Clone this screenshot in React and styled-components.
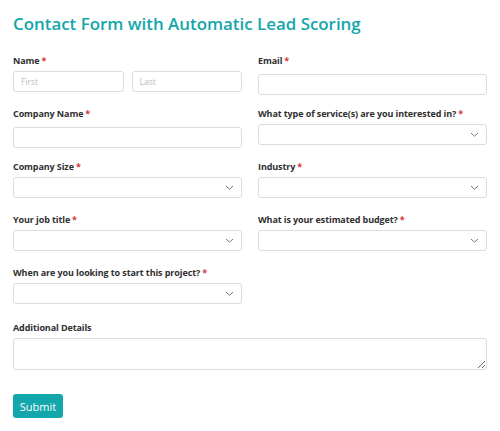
import React from 'react';
import styled, { createGlobalStyle } from 'styled-components';

const GlobalStyle = createGlobalStyle`
  body {
    margin: 0;
    background: #fff;
    font-family: "Open Sans", "Liberation Sans", sans-serif;
  }
`;

const Page = styled.div`
  padding: 12px 13px 13px 13px;
`;

const Title = styled.h1`
  margin: 0 0 19px;
  font-size: 16.9px;
  font-weight: 600;
  color: #13a6ab;
  line-height: 24px;
`;

const Grid = styled.div`
  display: grid;
  grid-template-columns: 1fr 1fr;
  column-gap: 16px;
  row-gap: 10px;
`;

const Field = styled.div`
  grid-column: ${p => (p.$full ? '1 / -1' : 'auto')};
  margin-top: ${p => (p.$full ? '2px' : '0')};
  min-height: 43px;
`;

const Label = styled.label`
  display: block;
  font-size: 9px;
  font-weight: 700;
  color: #2f2f2f;
  line-height: 12px;
  margin-bottom: 4px;
  letter-spacing: -0.1px;
`;

const Star = styled.span`
  color: #d63638;
  margin-left: 2px;
`;

const Pair = styled.div`
  display: flex;
  gap: 8px;
`;

const Input = styled.input`
  box-sizing: border-box;
  width: 100%;
  height: 21px;
  border: 1px solid #dcdcdc;
  border-radius: 3px;
  padding: 0 7px;
  font-family: inherit;
  font-size: 8.5px;
  color: #333;
  &::placeholder {
    color: #bdbdbd;
  }
`;

const SelectWrap = styled.div`
  position: relative;
  height: 21px;
  border: 1px solid #dcdcdc;
  border-radius: 3px;
  box-sizing: border-box;
`;

const Chevron = styled.svg`
  position: absolute;
  right: 7px;
  top: 6px;
`;

const TextArea = styled.textarea`
  box-sizing: border-box;
  display: block;
  width: 100%;
  height: 32px;
  border: 1px solid #dcdcdc;
  border-radius: 3px;
  resize: vertical;
  font-family: inherit;
`;

const Submit = styled.button`
  margin-top: 24px;
  width: 50px;
  height: 24px;
  background: #13a6ab;
  color: #fff;
  border: none;
  border-radius: 3px;
  font-family: inherit;
  font-size: 11px;
  padding: 0;
`;

const Select = () => (
  <SelectWrap>
    <Chevron width="9" height="7" viewBox="0 0 9 7">
      <path d="M1 2l3.5 3.2L8 2" fill="none" stroke="#777" strokeWidth="1" />
    </Chevron>
  </SelectWrap>
);

const ReqLabel = ({ children }) => (
  <Label>
    {children}
    <Star>*</Star>
  </Label>
);

export default function App() {
  return (
    <Page>
      <GlobalStyle />
      <Title>Contact Form with Automatic Lead Scoring</Title>
      <Grid>
        <Field>
          <ReqLabel>Name</ReqLabel>
          <Pair>
            <Input placeholder="First" />
            <Input placeholder="Last" />
          </Pair>
        </Field>
        <Field>
          <ReqLabel>Email</ReqLabel>
          <Input />
        </Field>
        <Field>
          <ReqLabel>Company Name</ReqLabel>
          <Input />
        </Field>
        <Field>
          <ReqLabel>What type of service(s) are you interested in?</ReqLabel>
          <Select />
        </Field>
        <Field>
          <ReqLabel>Company Size</ReqLabel>
          <Select />
        </Field>
        <Field>
          <ReqLabel>Industry</ReqLabel>
          <Select />
        </Field>
        <Field>
          <ReqLabel>Your job title</ReqLabel>
          <Select />
        </Field>
        <Field>
          <ReqLabel>What is your estimated budget?</ReqLabel>
          <Select />
        </Field>
        <Field>
          <ReqLabel>When are you looking to start this project?</ReqLabel>
          <Select />
        </Field>
        <Field />
        <Field $full>
          <Label>Additional Details</Label>
          <TextArea />
        </Field>
      </Grid>
      <Submit>Submit</Submit>
    </Page>
  );
}
